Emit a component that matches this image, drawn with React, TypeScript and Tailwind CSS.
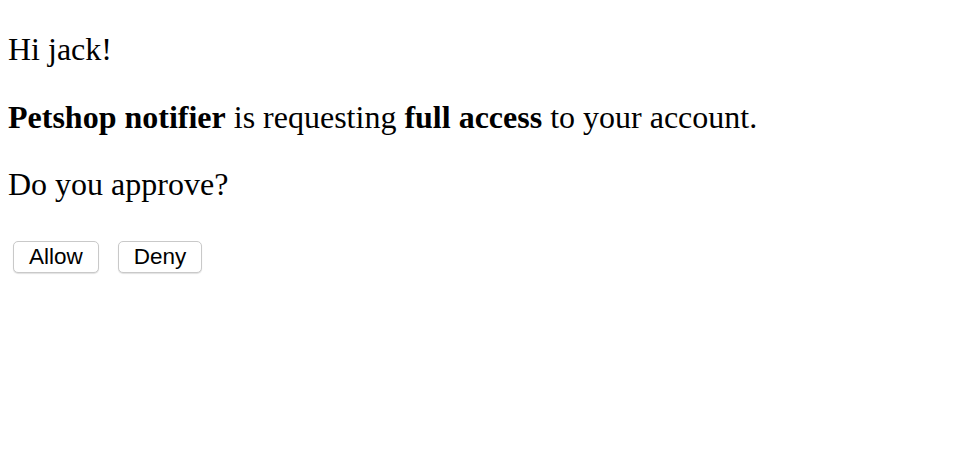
export default function App() {
  const serif = { fontFamily: '"Liberation Serif", "Times New Roman", serif' };
  const sans = { fontFamily: '"Liberation Sans", Arial, sans-serif' };
  return (
    <div className="min-h-screen bg-white text-black px-2 pt-[31px]" style={serif}>
      <div className="flex flex-col gap-[31.5px] text-[32px] leading-[36px]">
        <div className="h-[36px]">Hi jack!</div>
        <div className="h-[36px]">
          <b className="font-bold">Petshop notifier</b> is requesting <b className="font-bold">full access</b> to your account.
        </div>
        <div className="h-[36px]">Do you approve?</div>
      </div>
      <div className="flex gap-[19px] pl-[5px] mt-[39px]" style={sans}>
        <button className="h-[32px] px-[15px] rounded-[5px] border border-[#c9c9c9] bg-white text-[22.5px] leading-none text-black shadow-[0_1px_1px_rgba(0,0,0,0.12)]">
          Allow
        </button>
        <button className="h-[32px] px-[15px] rounded-[5px] border border-[#c9c9c9] bg-white text-[22.5px] leading-none text-black shadow-[0_1px_1px_rgba(0,0,0,0.12)]">
          Deny
        </button>
      </div>
    </div>
  );
}
